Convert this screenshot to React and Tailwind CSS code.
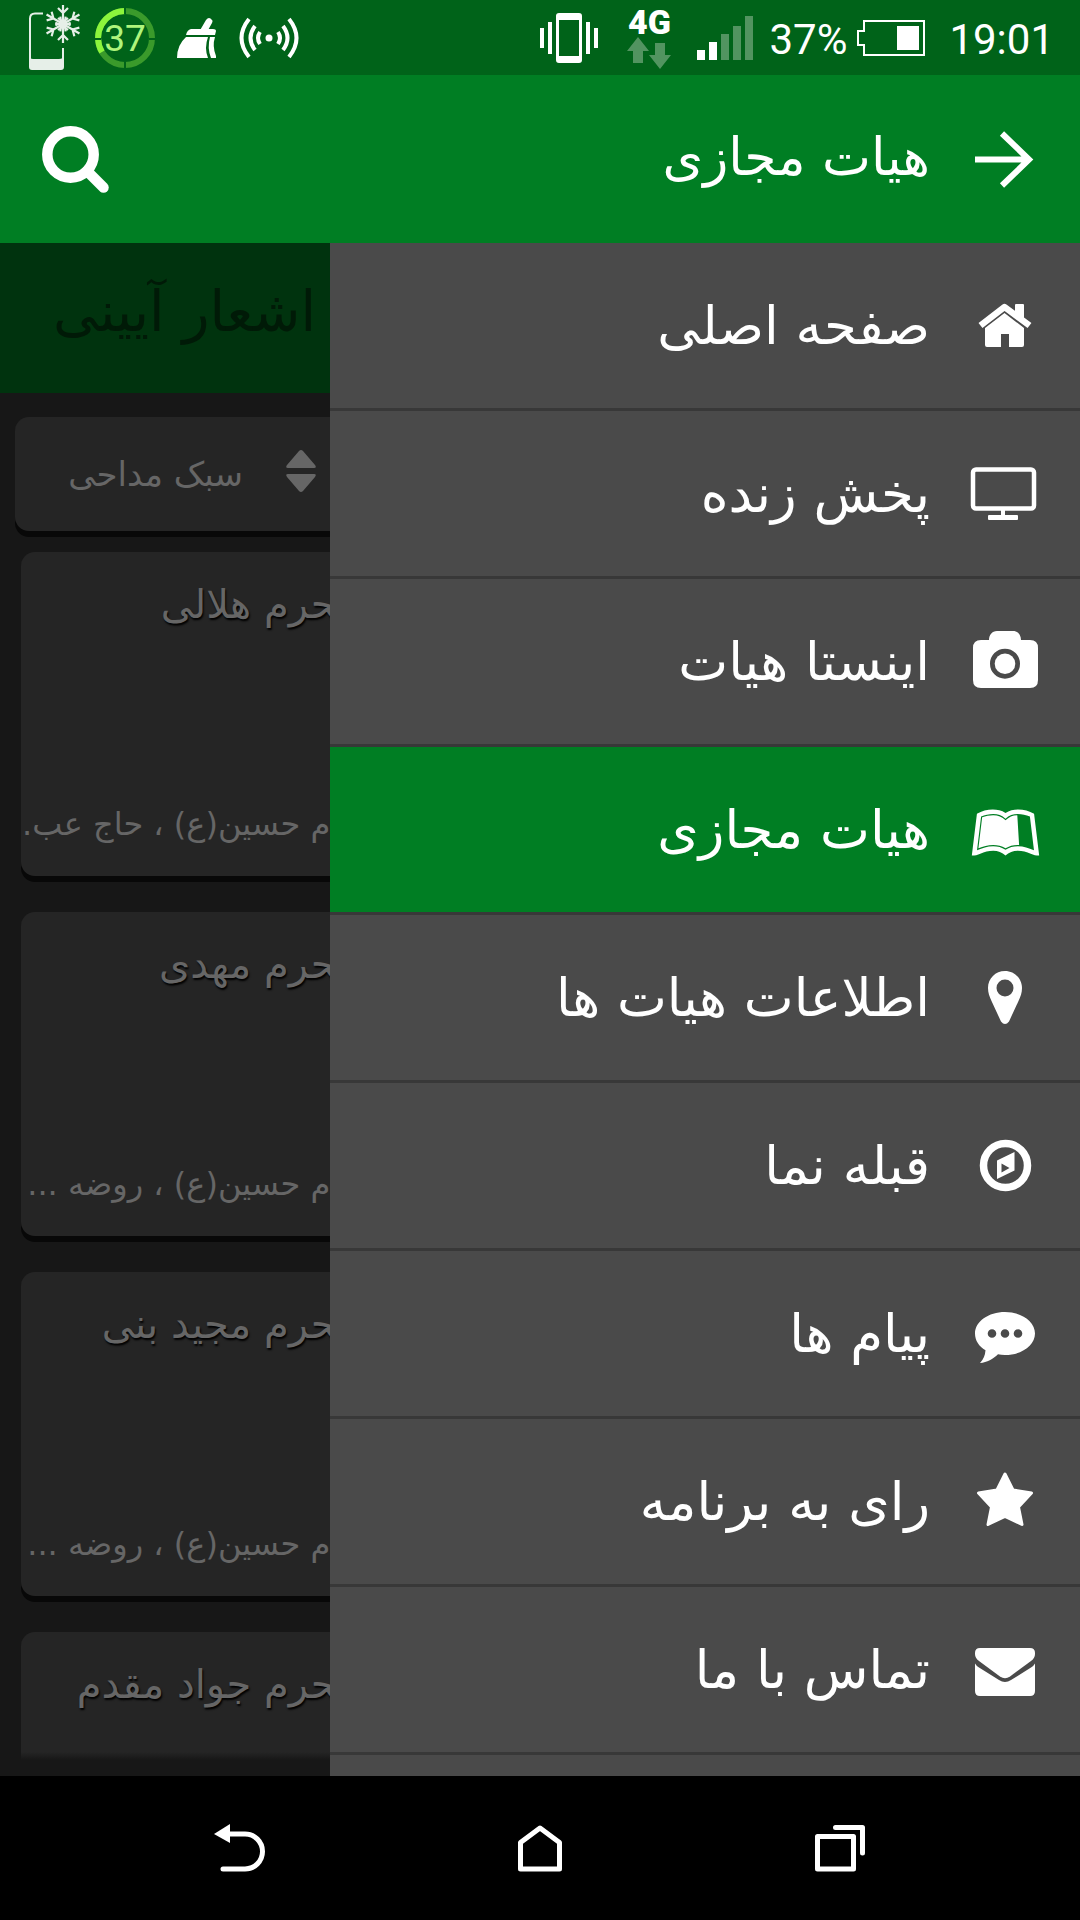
import React, { useState } from "react";
import { FaLeanpub } from "react-icons/fa";

const MenuIcon = ({ children }) => (
  <svg viewBox="0 0 71 71" className="h-[71px] w-[71px] shrink-0" fill="currentColor" aria-hidden="true">
    {children}
  </svg>
);

const HomeIcon = () => (
  <MenuIcon>
    <path d="M10.5 35.5 34.5 17l25 18.5" fill="none" stroke="currentColor" strokeWidth="6.500" strokeLinejoin="round" />
    <path d="M45 15q0-1 1-1h7q1 0 1 1v15l-9-7z" />
    <path d="M34.5 23 54 38v17q0 2-2 2H39V44h-8v13H17q-2 0-2-2V38z" />
  </MenuIcon>
);

const MonitorIcon = () => (
  <MenuIcon>
    <rect x="3" y="11.500" width="61" height="39" rx="3" fill="none" stroke="currentColor" strokeWidth="4.500" />
    <rect x="31" y="52" width="4" height="6" />
    <rect x="18" y="57" width="30" height="5" rx="1" />
  </MenuIcon>
);

const CameraIcon = () => (
  <MenuIcon>
    <path
      fillRule="evenodd"
      d="M11 14h8c0-5 3-9 8-9h16c5 0 8 4 8 9h9q8 0 8 8v32q0 8-8 8H11q-8 0-8-8V22q0-8 8-8zM35 22.700a15 15 0 1 0 0 30 15 15 0 1 0 0-30z"
    />
    <circle cx="35" cy="37.700" r="10.300" />
  </MenuIcon>
);

const BookIcon = () => (
  <MenuIcon>
    <FaLeanpub x="1" y="4" size={69} />
  </MenuIcon>
);

const PinIcon = () => (
  <MenuIcon>
    <path
      fillRule="evenodd"
      d="M35 9c-9.500 0-17 7.500-17 17 0 5 1.500 8.500 3.500 13L31 59.500q4 5 8 0L48.500 39c2-4.500 3.500-8 3.500-13 0-9.500-7.500-17-17-17zm0 8.500a8.500 8.500 0 1 1 0 17 8.500 8.500 0 1 1 0-17z"
    />
  </MenuIcon>
);

const CompassIcon = () => (
  <MenuIcon>
    <circle cx="35.500" cy="35.500" r="22" fill="none" stroke="currentColor" strokeWidth="7.500" />
    <path fillRule="evenodd" d="M44.500 22v18.500L27 49V30.500zM31.500 33.500v9l8-4.500z" />
  </MenuIcon>
);

const ChatIcon = () => (
  <MenuIcon>
    <path
      fillRule="evenodd"
      d="M35 14c16.600 0 30 9.600 30 21.500S51.600 57 35 57q-4 0-7-.7C23 61 17 64.500 10 65q5-5 5.500-12.700C9 48.500 5 42.500 5 35.500 5 23.600 18.400 14 35 14zM22 31.200a4.300 4.300 0 1 0 0 8.600 4.300 4.300 0 1 0 0-8.600zm13 0a4.300 4.300 0 1 0 0 8.600 4.300 4.300 0 1 0 0-8.600zm13 0a4.300 4.300 0 1 0 0 8.600 4.300 4.300 0 1 0 0-8.600z"
    />
  </MenuIcon>
);

const StarIcon = () => (
  <MenuIcon>
    <path
      d="M35 8l8 16 18.500 3-13 14 3.500 17.500L35 50.500l-17 8L21.500 41l-13-14L27 24z"
      stroke="currentColor"
      strokeWidth="3"
      strokeLinejoin="round"
    />
  </MenuIcon>
);

const MailIcon = () => (
  <MenuIcon>
    <path d="M10 14h50q5 0 5 5v1q0 4-4 7L40 42.500q-5 3.500-10 0L9 27q-4-3-4-7v-1q0-5 5-5z" />
    <path d="M5 29.500q1 2 4 4L29 46q6 4 12 0l20-12.500q3-2 4-4V57q0 5-5 5H10q-5 0-5-5z" />
  </MenuIcon>
);

const menuItems = [
  { id: "home", icon: HomeIcon, label: "صفحه اصلی" },
  { id: "live", icon: MonitorIcon, label: "پخش زنده" },
  { id: "insta", icon: CameraIcon, label: "اینستا هیات" },
  { id: "virtual", icon: BookIcon, label: "هیات مجازی" },
  { id: "info", icon: PinIcon, label: "اطلاعات هیات ها" },
  { id: "qibla", icon: CompassIcon, label: "قبله نما" },
  { id: "messages", icon: ChatIcon, label: "پیام ها" },
  { id: "rate", icon: StarIcon, label: "رای به برنامه" },
  { id: "contact", icon: MailIcon, label: "تماس با ما" },
];

const cards = [
  { title: "محرم هلالی", tags: "امام حسین(ع) ، حاج عب.." },
  { title: "محرم مهدی", tags: "امام حسین(ع) ، روضه ..." },
  { title: "محرم مجید بنی", tags: "امام حسین(ع) ، روضه ..." },
  { title: "محرم جواد مقدم", tags: "امام حسین(ع) ، روضه ..." },
];

function StatusBar() {
  return (
    <div className="flex h-[75px] shrink-0 items-center justify-between bg-[#006319] pl-[27px] pr-[26px] font-['Roboto',sans-serif] text-[42px] leading-[44px] text-white">
      <div className="flex items-center gap-[14px]">
        {/* Phone cooler */}
        <svg viewBox="0 0 54 75" className="h-[75px] w-[54px]" fill="none" stroke="#e6efe8">
          <path d="M16 13.500H8q-5 0-5 5V60M36 48v12" strokeWidth="2" />
          <path d="M2 57q1 2 4 2h26q4 0 5-3v11q0 3-3 3H5q-3 0-3-3z" fill="#e6efe8" stroke="none" />
          {[0, 60, 120, 180, 240, 300].map((angle) => (
            <path key={angle} d="M36 24V5M31 8l5 5 5-5M31 18l5 4 5-4" strokeWidth="2.200" transform={`rotate(${angle} 36 24)`} />
          ))}
        </svg>
        {/* Battery ring */}
        <svg viewBox="0 0 60 60" className="h-[60px] w-[60px]">
          <circle cx="30" cy="30" r="27" fill="none" stroke="#3a9a2b" strokeWidth="6" />
          <path d="M7 44A27 27 0 0 1 30 3" fill="none" stroke="#8cf53c" strokeWidth="6" />
          <path d="M30 0v6M30 54v6M0 31h6M54 31h6" stroke="#006319" strokeWidth="2" />
          <text x="30" y="43" textAnchor="middle" fontSize="37" fill="#aff57c" className="font-['Roboto',sans-serif]">37</text>
        </svg>
        <svg viewBox="0 0 40 42" className="ml-2 h-[42px] w-10" fill="#fff">
          <path d="M29 3q3-4 6 0 1 1 0 3l-5 9h-8zM14 12h22q3 0 3 2l-1 4H9q1-5 5-6z" />
          <path d="M9 20h22q-4 11 0 21H0q0-13 9-21z" />
          <path d="M33 20h5q-3 9 1 19v2h-5q-4-10-1-21z" />
        </svg>
        <svg viewBox="0 0 60 42" className="ml-2 h-[42px] w-[60px]" fill="none" stroke="#fff" strokeWidth="4">
          <circle cx="30" cy="21" r="3.500" fill="#fff" stroke="none" />
          <path d="M21 15q-4 6 0 12M16 9q-9 12 0 24M10 2q-15 19 0 38M39 15q4 6 0 12M44 9q9 12 0 24M50 2q15 19 0 38" />
        </svg>
      </div>

      <div className="flex items-center">
        <svg viewBox="0 0 58 50" className="h-[50px] w-[58px]" fill="#fff">
          <path fillRule="evenodd" d="M19 0h20q3 0 3 3v44q0 3-3 3H19q-3 0-3-3V3q0-3 3-3zm0 7v36h20V7z" />
          <path d="M0 15h4v20H0zM8 9h4v32H8zM46 9h4v32h-4zM54 15h4v20h-4z" />
        </svg>
        <div className="ml-[29px] flex w-[44px] flex-col items-center">
          <span className="text-[34px] font-black leading-[30px]">4G</span>
          <svg viewBox="0 0 44 32" className="h-8 w-11" fill="#529460">
            <path d="M11 0l11 14h-6v12H6V14H0zM28 6h10v12h6L33 32 22 18h6z" />
          </svg>
        </div>
        <svg viewBox="0 0 56 44" className="ml-[26px] h-11 w-14" fill="#529460">
          <path d="M0 34h8v10H0zM12 26h8v18h-8z" fill="#fff" />
          <path d="M24 18h8v26h-8zM36 10h8v34h-8zM48 0h8v44h-8z" />
        </svg>
        <span className="ml-4 pt-1">37%</span>
        <svg viewBox="0 0 68 36" className="ml-[10px] h-9 w-[68px]">
          <path d="M7 1h60v34H7V25H1V11h6z" fill="none" stroke="#fff" strokeWidth="2" />
          <path d="M40 6h22v24H40z" fill="#fff" />
        </svg>
        <span className="ml-6 pt-1">19:01</span>
      </div>
    </div>
  );
}

function Header() {
  return (
    <header className="flex h-[168px] shrink-0 items-center justify-between bg-[#007e23] pl-[42px] pr-[39px] text-white">
      <button type="button" aria-label="جستجو">
        <svg viewBox="0 0 67 67" className="h-[67px] w-[67px]" fill="none" stroke="currentColor" strokeWidth="10.500">
          <circle cx="28.500" cy="28.500" r="23.200" />
          <path d="M45 45l16.500 16.500" strokeLinecap="round" />
        </svg>
      </button>
      <div dir="rtl" className="flex items-center gap-10">
        <button type="button" aria-label="بازگشت">
          <svg viewBox="0 0 71 71" className="h-[71px] w-[71px]" fill="none" stroke="currentColor" strokeWidth="6">
            <path d="M5 35.500h55M32 9.500l27 26-27 26" />
          </svg>
        </button>
        <h1 className="pb-1 text-[52px] leading-[60px]">هیات مجازی</h1>
      </div>
    </header>
  );
}

function PoemList() {
  return (
    <section dir="rtl" className="flex min-h-0 min-w-0 flex-col overflow-hidden bg-[#171717] pb-4 text-[#666]">
      <h2 className="flex h-[150px] shrink-0 items-center whitespace-nowrap bg-[#00330e] pr-[14px] pb-3 text-[56px] text-[#001a07]">
        اشعار آیینی
      </h2>
      <div className="relative min-h-0 flex-1 overflow-hidden pt-6">
        <div className="relative mb-[21px] ml-[15px]">
          <select
            aria-label="سبک مداحی"
            className="block h-[114px] w-full appearance-none rounded-l-[14px] bg-[#252525] pr-[87px] text-[34px] shadow-[0_6px_0_#080808]"
          >
            <option>سبک مداحی</option>
          </select>
          <svg viewBox="0 0 30 42" className="pointer-events-none absolute right-[14px] top-[33px] h-[42px] w-[30px]" fill="currentColor">
            <path d="M13 1q2-2 4 0l12 14q2 3-1 3H2q-3 0-1-3zM2 24h26q3 0 1 3L17 41q-2 2-4 0L1 27q-2-3 1-3z" />
          </svg>
        </div>
        {/* Cards continue underneath the open drawer */}
        <div className="-mr-[60px] ml-[21px] flex flex-col gap-9">
          {cards.map((card) => (
            <article
              key={card.title}
              className="flex h-[324px] shrink-0 flex-col justify-between overflow-hidden whitespace-nowrap rounded-[14px] bg-[#252525] pt-6 pb-6 shadow-[0_6px_0_#080808]"
            >
              <h3 className="pr-8 text-[40px] leading-[56px] [text-shadow:1px_2px_2px_#000]">{card.title}</h3>
              <p className="pr-6 text-[32px] leading-[56px]">{card.tags}</p>
            </article>
          ))}
        </div>
        <div className="absolute inset-x-0 bottom-0 h-2 bg-linear-to-b from-transparent to-[#171717]" />
      </div>
    </section>
  );
}

function Drawer() {
  const [activeItem, setActiveItem] = useState("virtual");

  return (
    <nav dir="rtl" className="overflow-hidden bg-[#4a4a4a] text-white">
      {menuItems.map((item) => {
        const Icon = item.icon;
        const isActive = activeItem === item.id;

        return (
          <button
            key={item.id}
            type="button"
            onClick={() => setActiveItem(item.id)}
            className={`flex h-[168px] w-full items-center gap-10 border-b-[3px] border-[#383838] pr-[39px] text-[53px] leading-[60px] ${
              isActive ? "bg-[#007e23]" : "bg-[#4a4a4a]"
            }`}
          >
            <Icon />
            <span>{item.label}</span>
          </button>
        );
      })}
    </nav>
  );
}

function NavigationBar() {
  return (
    <div className="grid h-36 shrink-0 grid-cols-3 items-center justify-items-center bg-black px-[90px] text-white">
      <button type="button" aria-label="Back">
        <svg viewBox="0 0 52 48" className="h-12 w-[52px]" fill="none" stroke="currentColor" strokeWidth="5">
          <path d="M12 10h19a17.500 17.500 0 0 1 0 35H9" strokeLinecap="round" />
          <path d="M0 10L16 0v19z" fill="currentColor" stroke="none" />
        </svg>
      </button>
      <button type="button" aria-label="Home">
        <svg viewBox="0 0 44 48" className="h-12 w-11" fill="none" stroke="currentColor" strokeWidth="5" strokeLinejoin="round">
          <path d="M2.500 45V18.500L22 4l19.500 14.500V45z" />
        </svg>
      </button>
      <button type="button" aria-label="Recent apps">
        <svg viewBox="0 0 50 48" className="h-12 w-[50px]" fill="none" stroke="currentColor" strokeWidth="5" strokeLinejoin="round">
          <path d="M2.500 12.500h36V45h-36z" />
          <path d="M20.500 3.500h27V29" strokeLinecap="round" />
        </svg>
      </button>
    </div>
  );
}

export default function App() {
  return (
    <div className="flex h-screen flex-col bg-black font-['DejaVu_Sans',sans-serif]">
      <StatusBar />
      <Header />
      <main className="grid min-h-0 flex-1 grid-cols-[11fr_25fr] grid-rows-[minmax(0,1fr)]">
        <PoemList />
        <Drawer />
      </main>
      <NavigationBar />
    </div>
  );
}
